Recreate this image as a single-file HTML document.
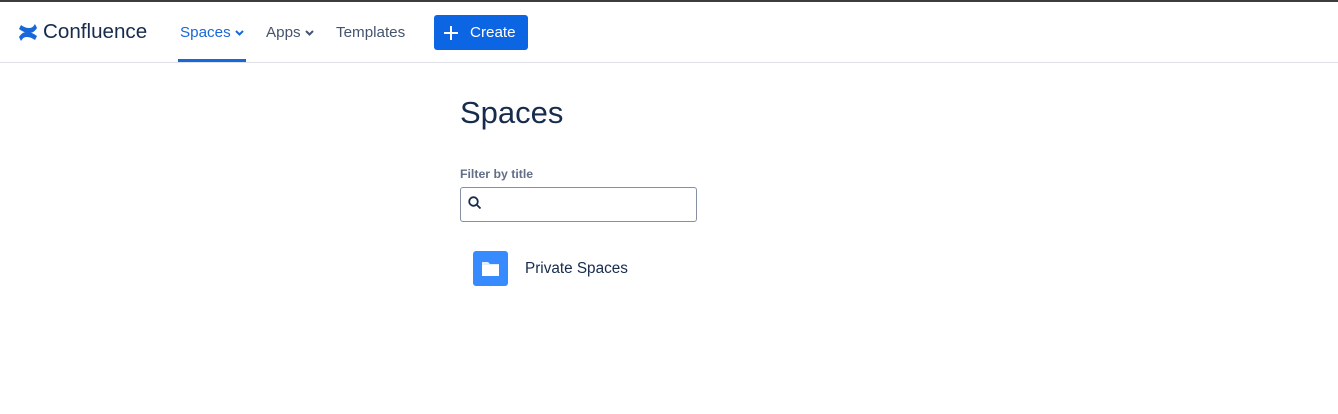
<!DOCTYPE html>
<html><head><style>
*{margin:0;padding:0;box-sizing:border-box}
body{width:1338px;height:414px;background:#fff;font-family:"Liberation Sans",sans-serif;position:relative;overflow:hidden}
.top{position:absolute;left:0;top:0;width:1338px;height:2px;background:#3d3d3d}
.hdr{position:absolute;left:0;top:2px;width:1338px;height:61px;border-bottom:1px solid #dfe1e6}
.t{position:absolute;font-size:15.2px;color:#44546f;top:22px}
</style></head><body>
<div class="top"></div>
<div class="hdr">
<svg style="position:absolute;left:18px;top:21px" width="20" height="19" viewBox="0 0 20 19"><path d="M1 14c2-3 4-5 8-5s7 2 10 4l-2 4c-3-2-5-3-8-3s-4 1-6 4z" fill="#1868db"/><path d="M19 5c-2 3-4 5-8 5S4 8 1 6l2-4c3 2 5 3 8 3s4-1 6-4z" fill="#1868db"/></svg>
<div style="position:absolute;left:43px;top:18px;font-size:20.6px;color:#172b4d">Confluence</div>
<div class="t" style="left:180px;color:#1868db">Spaces</div>
<svg style="position:absolute;left:235px;top:28px" width="9" height="6"><path d="M1 1l3.5 3.5L8 1" stroke="#1868db" stroke-width="2" fill="none"/></svg>
<div style="position:absolute;left:178px;top:57px;width:68px;height:3px;background:#1868db"></div>
<div class="t" style="left:266px">Apps</div>
<svg style="position:absolute;left:305px;top:28px" width="9" height="6"><path d="M1 1l3.5 3.5L8 1" stroke="#44546f" stroke-width="2" fill="none"/></svg>
<div class="t" style="left:336px">Templates</div>
<div style="position:absolute;left:434px;top:13px;width:94px;height:35px;background:#0c66e4;border-radius:3px;color:#fff;font-size:15.2px">
<svg style="position:absolute;left:10px;top:11px" width="14" height="14"><path d="M7 0v14M0 7h14" stroke="#fff" stroke-width="2"/></svg>
<span style="position:absolute;left:36px;top:9px">Create</span></div>
</div>
<div style="position:absolute;left:460px;top:95px;font-size:31px;color:#172b4d">Spaces</div>
<div style="position:absolute;left:460px;top:167px;font-size:12.3px;font-weight:bold;color:#626f86">Filter by title</div>
<div style="position:absolute;left:460px;top:187px;width:237px;height:35px;border:1px solid #8590a2;border-radius:3px">
<svg style="position:absolute;left:7px;top:8px" width="14" height="14"><circle cx="5.5" cy="5.5" r="4.3" stroke="#172b4d" stroke-width="1.8" fill="none"/><path d="M8.5 8.5l4 4" stroke="#172b4d" stroke-width="1.8"/></svg></div>
<div style="position:absolute;left:473px;top:251px;width:35px;height:35px;background:#388bff;border-radius:3px">
<svg style="position:absolute;left:9px;top:10px" width="17" height="15"><path d="M0 1h6l2 2h9v12H0z" fill="#fff" opacity=".85"/><path d="M0 4h17v11H0z" fill="#fff"/></svg></div>
<div style="position:absolute;left:525px;top:260px;font-size:15.3px;color:#172b4d">Private Spaces</div>
</body></html>
